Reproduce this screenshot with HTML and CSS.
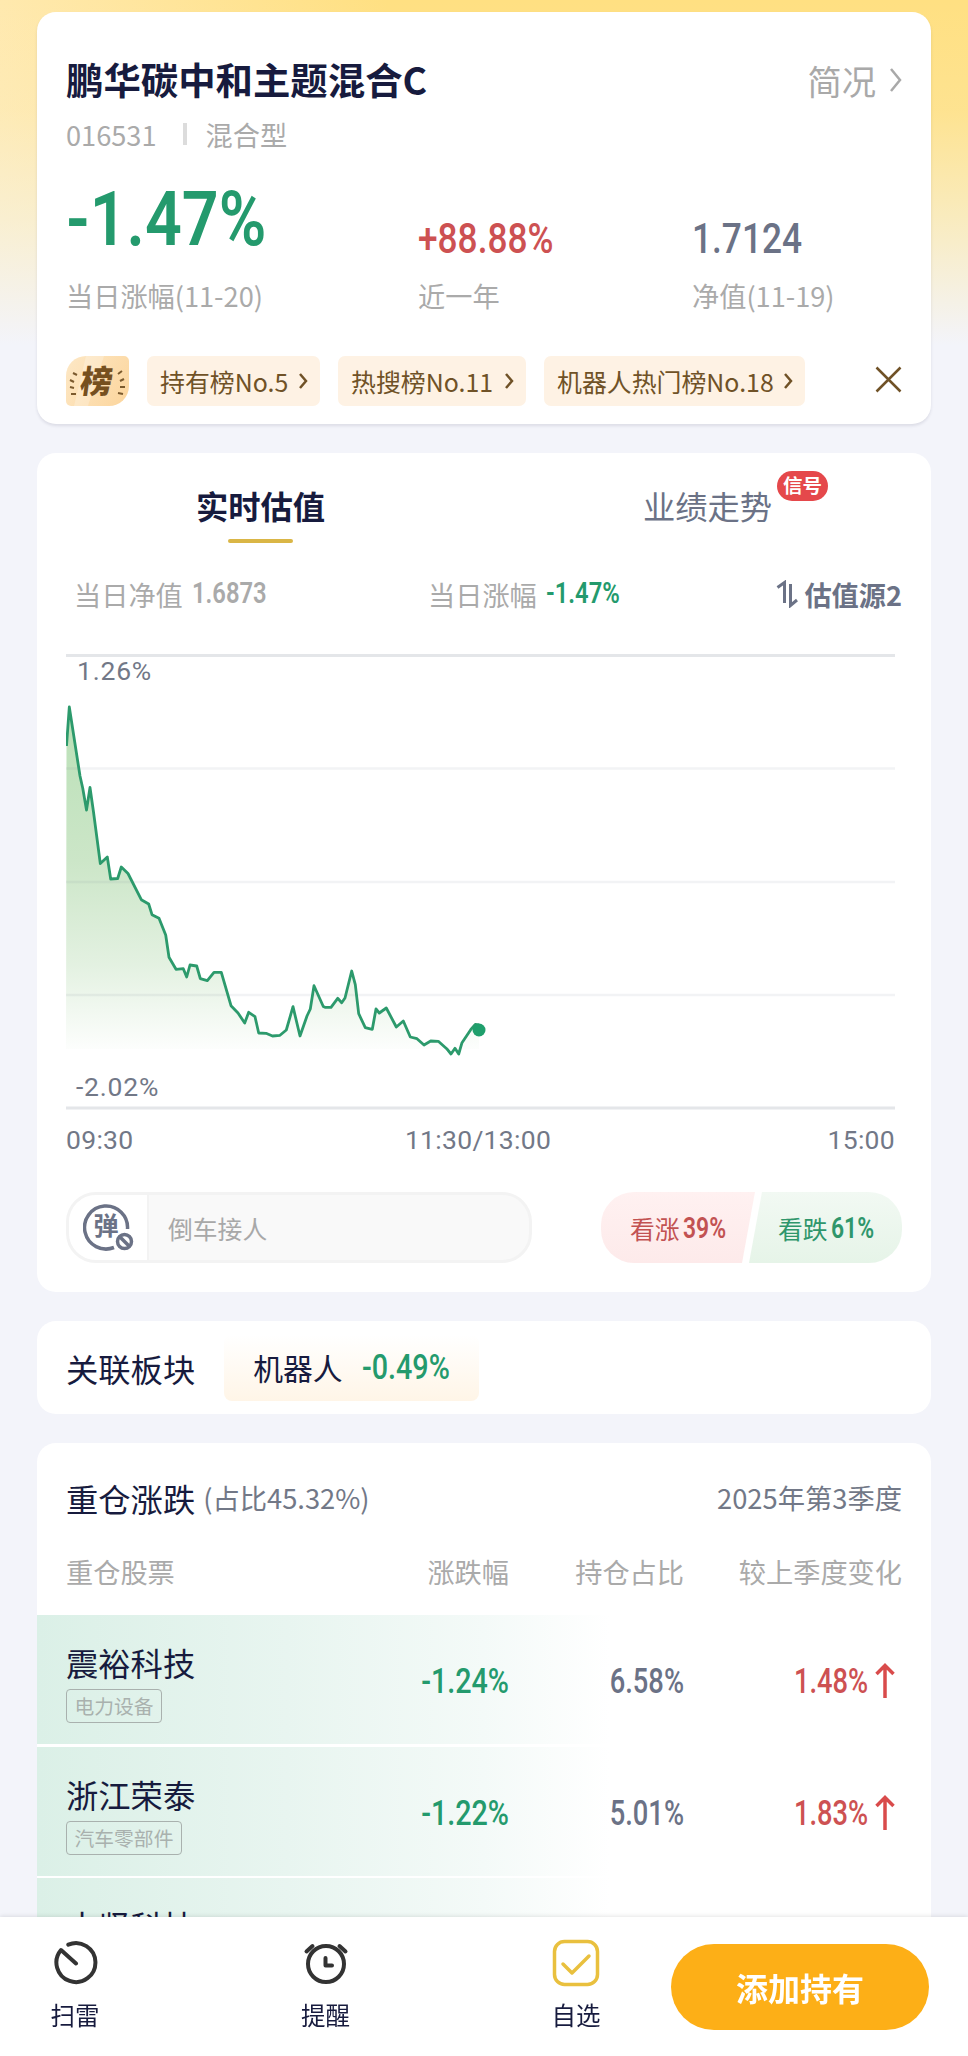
FILE: index.html
```html
<!DOCTYPE html>
<html lang="zh-CN">

<head>
    <meta charset="UTF-8" />
    <title>鹏华碳中和主题混合C</title>
    <link rel="stylesheet" href="styles.css">
</head>

<body>
    <main>
        <section class="card fund">
            <div class="fund-head">
                <h1>鹏华碳中和主题混合C</h1>
                <a class="more">简况
                    <svg width="13" height="26" viewBox="0 0 13 26"><path d="M2 2l9 11-9 11" /></svg>
                </a>
            </div>
            <div class="fund-sub"><span>016531</span><i></i><span>混合型</span></div>
            <div class="stats">
                <div>
                    <b class="num big green">-1.47%</b>
                    <p>当日涨幅(11-20)</p>
                </div>
                <div>
                    <b class="num mid red">+88.88%</b>
                    <p>近一年</p>
                </div>
                <div>
                    <b class="num mid slate">1.7124</b>
                    <p>净值(11-19)</p>
                </div>
            </div>
            <div class="ranks">
                <div class="rank-logo">
                    <svg width="63" height="50" viewBox="0 0 63 50">
                        <path d="M20 0h18L22 50H8z" fill="#fff" opacity=".25" />
                        <path d="M11 19l-4-2M8 26l-4-2M8 32l-4-1M10 38l-5 0M52 18l4-3M54 25l4-2M54 31l5 0M52 37l5 1" stroke="#7b5a2e" stroke-width="2" />
                    </svg>
                    <span>榜</span>
                </div>
                <a class="rank w1">持有榜No.5<svg width="9" height="16" viewBox="0 0 9 16"><path d="M1 1l6 7-6 7" /></svg></a>
                <a class="rank w2">热搜榜No.11<svg width="9" height="16" viewBox="0 0 9 16"><path d="M1 1l6 7-6 7" /></svg></a>
                <a class="rank w3">机器人热门榜No.18<svg width="9" height="16" viewBox="0 0 9 16"><path d="M1 1l6 7-6 7" /></svg></a>
                <svg class="close" width="27" height="27" viewBox="0 0 27 27"><path d="M1.500 1.500l24 24M25.500 1.500l-24 24" /></svg>
            </div>
        </section>

        <section class="card valuation">
            <div class="tabs">
                <div class="tab active"><span>实时估值</span></div>
                <div class="tab"><span>业绩走势<em>信号</em></span></div>
            </div>
            <div class="quote">
                <div class="q1">当日净值<b class="num small">1.6873</b></div>
                <div class="q2">当日涨幅<b class="num small green">-1.47%</b></div>
                <div class="source">
                    <svg width="22" height="28" viewBox="0 0 22 28"><path d="M1.500 7.500L8.500 2.500V23M14.500 4V25.500L21 20" /></svg>
                    估值源2
                </div>
            </div>

            <svg class="chart" width="836" height="520" viewBox="66 640 836 520">
                <defs>
                    <linearGradient id="area" gradientUnits="userSpaceOnUse" x1="0" y1="707" x2="0" y2="1050">
                        <stop offset="0" stop-color="#b9e0b6" />
                        <stop offset=".45" stop-color="#cce6c8" />
                        <stop offset=".75" stop-color="#e3f1e1" />
                        <stop offset="1" stop-color="#fdfefd" />
                    </linearGradient>
                </defs>
                <path id="fill" fill="url(#area)" />
                <path class="grid" d="M66 768.500H895M66 882H895M66 995H895" />
                <path class="axis" d="M66 655.500H895M66 1108H895" />
                <polyline id="line" class="line" />
                <circle cx="479" cy="1030" r="6.500" fill="#1f9f6c" />
                <text x="77" y="680">1.26%</text>
                <text x="76" y="1096">-2.02%</text>
                <text class="time" x="66" y="1149">09:30</text>
                <text class="time" x="478" y="1149" text-anchor="middle">11:30/13:00</text>
                <text class="time" x="895" y="1149" text-anchor="end">15:00</text>
            </svg>

            <div class="talk">
                <div class="barrage">
                    <div class="barrage-switch">
                        <svg width="52" height="48" viewBox="0 0 52 48">
                            <path d="M31 43.500A21.500 21.500 0 1 1 44.500 25" />
                            <circle cx="41.500" cy="37.500" r="7" />
                            <path d="M37 33l9 9" />
                            <text x="23" y="31">弹</text>
                        </svg>
                    </div>
                    <span>倒车接人</span>
                </div>
                <div class="vote">
                    <div class="up">看涨<b class="num tiny">39%</b></div>
                    <div class="down">看跌<b class="num tiny">61%</b></div>
                </div>
            </div>
        </section>

        <section class="card sector">
            <h2>关联板块</h2>
            <div class="sector-chip">机器人<b class="num row green">-0.49%</b></div>
        </section>

        <section class="card holdings">
            <div class="holdings-head">
                <h2>重仓涨跌</h2>
                <span>(占比45.32%)</span>
                <span class="season">2025年第3季度</span>
            </div>
            <div class="line-grid thead">
                <span>重仓股票</span><span>涨跌幅</span><span>持仓占比</span><span>较上季度变化</span>
            </div>
            <div class="line-grid stock">
                <div>
                    <h3>震裕科技</h3>
                    <small>电力设备</small>
                </div>
                <b class="num row green">-1.24%</b>
                <b class="num row slate thin">6.58%</b>
                <div class="change"><b class="num row red thin">1.48%</b><svg width="20" height="35" viewBox="0 0 20 35"><path d="M10 35V2.500M1.500 11L10 2.500l8.500 8.500" /></svg></div>
            </div>
            <div class="line-grid stock">
                <div>
                    <h3>浙江荣泰</h3>
                    <small>汽车零部件</small>
                </div>
                <b class="num row green">-1.22%</b>
                <b class="num row slate thin">5.01%</b>
                <div class="change"><b class="num row red thin">1.83%</b><svg width="20" height="35" viewBox="0 0 20 35"><path d="M10 35V2.500M1.500 11L10 2.500l8.500 8.500" /></svg></div>
            </div>
            <div class="line-grid stock">
                <div>
                    <h3>中坚科技</h3>
                </div>
            </div>
        </section>
    </main>

    <nav>
        <a>
            <svg width="48" height="48" viewBox="0 0 48 48"><path d="M17.300 5.600A19.500 19.500 0 1 1 10 11L25 24.500" /></svg>
            扫雷
        </a>
        <a>
            <svg width="48" height="48" viewBox="0 0 48 48"><circle cx="24" cy="25" r="18" /><path d="M4.500 12.500l6-5.500M43.500 12.500l-6-5.500M23.500 19v7.500h6.500" /></svg>
            提醒
        </a>
        <a class="on">
            <svg width="48" height="48" viewBox="0 0 48 48"><rect x="2.500" y="2.500" width="43" height="43" rx="10" /><path d="M11 25l9 9 17-17" /></svg>
            自选
        </a>
        <button>添加持有</button>
    </nav>

    <script>
        // 分时估值走势
        const points = [
            [66.5, 746], [69.3, 707], [80, 776], [82.7, 788], [86.5, 810], [90, 787.5], [93.5, 812],
            [100.3, 863.5], [107.3, 857], [110.7, 879], [117.7, 878.5], [121.3, 867], [128, 873.5],
            [141.3, 899.7], [148.7, 904], [152, 914.7], [159, 918.3], [165.7, 935], [169, 957.3],
            [176, 969.3], [183.3, 968.7], [186.7, 977], [190, 965], [196.7, 966], [200.3, 978.7],
            [207.3, 980.7], [214, 972.3], [221.3, 972.3], [231, 1005.7], [238, 1013], [244.7, 1023],
            [248.7, 1012.3], [255, 1016.7], [258.7, 1033], [266, 1033.3], [272.5, 1036], [280, 1035.3],
            [286.3, 1030], [293, 1006.7], [300, 1036], [307, 1016], [310.3, 1009], [314, 985.7],
            [323.3, 1006.5], [325, 1007.3], [331, 1007.3], [337.7, 998.3], [341.7, 1002.7], [345, 998],
            [351.7, 971], [355.3, 984.7], [358.7, 1013.7], [365.3, 1027.7], [372.3, 1029.3], [376, 1009],
            [379.3, 1013], [386.3, 1008], [396.3, 1027], [403.3, 1021], [410.3, 1037], [417, 1038.7],
            [424, 1045], [430.7, 1041], [438.3, 1041.3], [446.7, 1048.7], [451, 1054], [455, 1048.3],
            [458.7, 1054], [462, 1042.7], [470.7, 1029.7], [475.3, 1024.3], [479, 1025]
        ];
        const line = points.map(p => p.join(',')).join(' ');
        document.getElementById('line').setAttribute('points', line);
        document.getElementById('fill').setAttribute('d', 'M66 1049L' + line + 'V1049Z');
    </script>
</body>

</html>
```
FILE: styles.css
```css
* {
    box-sizing: border-box;
    margin: 0;
    padding: 0;
}

body {
    height: 2056px;
    overflow: hidden;
    font-family: "Noto Sans CJK SC", sans-serif;
    font-size: 27.200px;
    color: #171b3e;
    background:
        linear-gradient(rgba(243, 244, 250, 0) 0, rgba(246, 242, 225, .15) 110px, rgba(245, 243, 232, .6) 220px, #f3f4fa 345px),
        linear-gradient(90deg, #ffe9ae, #ffe082 40%, #ffe082);
}

main {
    display: flex;
    flex-direction: column;
    gap: 29px;
    padding: 12px 37px 0;
}

svg {
    display: block;
    flex: none;
    fill: none;
}

h1,
h2,
h3 {
    font-weight: 400;
    font-size: 32.300px;
}

.card {
    background: #fff;
    border-radius: 19px;
    padding: 0 29px;
}

.green { color: #249a6d; }
.red { color: #cd5152; }
.slate { color: #6b7286; }

/* condensed digits */
.num {
    display: inline-block;
    font-family: Roboto, sans-serif;
    font-weight: 500;
    white-space: nowrap;
    transform: scaleX(.82);
    transform-origin: left center;
}

/* fund card */
.fund {
    height: 412px;
    padding-top: 40px;
    box-shadow: 0 2px 3px rgba(60, 60, 90, .12);
}

.fund-head {
    display: flex;
    justify-content: space-between;
    align-items: center;
    height: 54px;
}

h1 {
    font-size: 37.400px;
    font-weight: 700;
    line-height: 54px;
}

.more {
    display: flex;
    align-items: center;
    gap: 13px;
    padding-top: 2px;
    font-size: 34.300px;
    line-height: 54px;
    color: #a9a9a9;
}

.more svg {
    stroke: #a9a9a9;
    stroke-width: 2.500;
}

.fund-sub {
    display: flex;
    align-items: center;
    height: 36px;
    margin-top: 10px;
    color: #aaa;
}

.fund-sub i {
    width: 4px;
    height: 22px;
    margin: 0 19px 0 26px;
    background: #dcdcdc;
}

.stats {
    display: grid;
    grid-template-columns: 352px 274px 1fr;
    margin-top: 26px;
}

.stats > div {
    display: flex;
    flex-direction: column;
    justify-content: flex-end;
}

.stats p {
    margin-top: 17px;
    line-height: 40px;
    color: #aaa;
}

.big {
    margin-bottom: -1px;
    padding-top: 1px;
    font-size: 76px;
    font-weight: 600;
    line-height: 80px;
    transform: scaleX(.85);
}

.mid {
    font-size: 43px;
    line-height: 40px;
}

.small {
    font-size: 29px;
    font-weight: 600;
}

.tiny {
    width: 42px;
    font-size: 29px;
    font-weight: 600;
    transform: scaleX(.79);
}

.row {
    font-size: 35px;
}

.ranks {
    display: flex;
    align-items: center;
    height: 50px;
    gap: 18px;
    margin-top: 41px;
}

.rank-logo {
    position: relative;
    width: 63px;
    height: 50px;
    overflow: hidden;
    border-radius: 20px 5px 20px 5px;
    background: linear-gradient(120deg, #fde8c6, #fcd59c);
}

.rank-logo span {
    position: absolute;
    left: 15px;
    top: 3px;
    font-size: 32px;
    font-weight: 900;
    line-height: 40px;
    color: #76501f;
    transform: skewX(-8deg);
}

.rank {
    display: flex;
    align-items: center;
    justify-content: space-between;
    height: 50px;
    padding: 0 12px 0 13px;
    border-radius: 7px;
    background: #fef2e4;
    font-size: 24.900px;
    color: #705227;
    white-space: nowrap;
}

.rank svg,
.close {
    stroke: #705227;
    stroke-width: 2.500;
}

.w1 { width: 173px; }
.w2 { width: 188px; }
.w3 { width: 261px; }

.close {
    margin: 0 0 4px auto;
}

/* valuation card */
.valuation {
    height: 839px;
}

.tabs {
    display: flex;
    height: 92px;
    margin: 0 -29px;
}

.tab {
    flex: 1;
    padding-top: 28px;
    text-align: center;
    font-size: 32.300px;
    line-height: 48px;
    color: #6b7286;
}

.tab span {
    position: relative;
}

.tab.active {
    font-weight: 700;
    color: #171b3e;
}

.tab.active::after {
    content: "";
    display: block;
    width: 65px;
    height: 4px;
    margin: 10px auto 0;
    border-radius: 2px;
    background: #dab646;
}

.tab em {
    position: absolute;
    left: 134px;
    top: -11px;
    width: 51px;
    height: 30px;
    border-radius: 15px;
    background: #e5484b;
    color: #fff;
    font-size: 19.500px;
    font-style: normal;
    font-weight: 700;
    line-height: 28px;
}

.quote {
    display: flex;
    align-items: center;
    height: 40px;
    margin-top: 29px;
    padding-left: 8px;
    line-height: 40px;
    color: #aaa;
}

.quote .num {
    margin-left: 9px;
    line-height: 39px;
    vertical-align: top;
}

.q1 { width: 354px; }

.source {
    display: flex;
    align-items: center;
    gap: 6px;
    margin-left: auto;
    font-weight: 700;
    color: #6b7286;
}

.source svg {
    stroke: #6b7286;
    stroke-width: 3;
}

.chart {
    margin-top: 26px;
}

.chart text {
    font-family: Roboto, sans-serif;
    font-size: 26.500px;
    letter-spacing: .8px;
    fill: #727887;
}

.chart .time {
    letter-spacing: .3px;
}

.grid { stroke: rgba(110, 125, 145, .09); stroke-width: 2.500; }
.axis { stroke: #e4e6e9; stroke-width: 3; }

.line {
    stroke: #2c9a6c;
    stroke-width: 2.800;
    stroke-linejoin: round;
}

.talk {
    display: flex;
    justify-content: space-between;
    margin-top: 32px;
    font-size: 24.800px;
    line-height: 71px;
}

.barrage {
    display: flex;
    width: 466px;
    height: 71px;
    border: 3px solid #f3f3f3;
    border-radius: 30px;
    background: #f9f9f9;
    color: #a8a8a8;
    overflow: hidden;
    line-height: 67px;
}

.barrage-switch {
    width: 80px;
    margin-right: 19px;
    padding: 9px 0 0 14px;
    border-right: 2px solid #f3f3f3;
    background: #fff;
}

.barrage-switch svg {
    stroke: #6b7286;
    stroke-width: 3.500;
}

.barrage-switch text {
    font-size: 25px;
    font-weight: 700;
    text-anchor: middle;
    fill: #6b7286;
    stroke: none;
}

.vote {
    display: flex;
    width: 301px;
    height: 71px;
    border-radius: 33px;
    overflow: hidden;
}

.vote div {
    padding-left: 29px;
    line-height: 73px;
    white-space: nowrap;
}

.vote .num {
    margin-left: 3px;
    line-height: 72px;
    vertical-align: top;
}

.up {
    width: 154px;
    color: #c25252;
    background: linear-gradient(#fff1f1, #fdeaea);
    clip-path: polygon(0 0, 100% 0, 141px 100%, 0 100%);
}

.down {
    width: 153px;
    margin-left: -6px;
    color: #2f966b;
    background: linear-gradient(#f2f9f3, #e6f4e8);
    clip-path: polygon(13px 0, 100% 0, 100% 100%, 0 100%);
}

/* sector */
.sector {
    display: flex;
    align-items: center;
    height: 93px;
}

.sector-chip {
    width: 255px;
    height: 66px;
    margin-left: 29px;
    padding-left: 29px;
    border-radius: 8px;
    background: linear-gradient(#fff, #fff5e7);
    font-size: 29.800px;
    line-height: 65px;
    white-space: nowrap;
}

.sector-chip .num {
    margin-left: 19px;
    line-height: 66px;
    vertical-align: top;
}

/* holdings */
.holdings {
    height: 620px;
    overflow: hidden;
}

.holdings-head {
    display: flex;
    align-items: center;
    height: 60px;
    margin-top: 25px;
    color: #727887;
}

.holdings-head h2 {
    margin-right: 8px;
    color: #171b3e;
}

.holdings-head span {
    margin-top: -2px;
    font-size: 27.300px;
}

.holdings-head .season {
    margin-left: auto;
}

.line-grid {
    display: grid;
    grid-template-columns: 268px 175px 175px 218px;
    margin: 0 -29px;
    padding: 0 29px;
    text-align: right;
}

.line-grid > :first-child {
    text-align: left;
}

.thead {
    height: 87px;
    line-height: 87px;
    color: #aaa;
}

.stock {
    height: 129px;
    margin-bottom: 2.500px;
    background: linear-gradient(90deg, #dbf0e7, #e8f5f0 28%, #f4faf8 50%, #fff 64%);
}

.stock h3 {
    margin-top: 24px;
    line-height: 46px;
}

.stock small {
    display: inline-block;
    height: 34px;
    margin-top: 4px;
    padding: 0 7.500px;
    border: 1px solid #a9b1ae;
    border-radius: 4px;
    font-size: 19.800px;
    line-height: 31px;
    color: #a9b1ae;
    vertical-align: top;
}

.stock .num {
    line-height: 133px;
    transform-origin: right center;
}

.stock .thin {
    transform: scaleX(.78);
}

.change {
    display: flex;
    justify-content: flex-end;
    gap: 7px;
    padding-right: 7px;
}

.change svg {
    margin-top: 48px;
    stroke: #d94b4b;
    stroke-width: 3.500;
}

/* bottom bar */
nav {
    position: fixed;
    left: 0;
    right: 0;
    bottom: 0;
    display: flex;
    height: 139px;
    background: #fff;
    box-shadow: 0 -1px 4px rgba(0, 0, 0, .1);
}

nav a {
    width: 150px;
    margin-right: 100.500px;
    padding-top: 22px;
    text-align: center;
    font-size: 24.500px;
    line-height: 36px;
}

nav a.on {
    margin-right: 20px;
}

nav svg {
    margin: 0 auto 10px;
    stroke: #333;
    stroke-width: 4;
    stroke-linecap: round;
    stroke-linejoin: round;
}

nav .on svg {
    stroke: #e9c03e;
    stroke-width: 3.500;
}

nav button {
    width: 258px;
    height: 86px;
    margin-top: 27px;
    border: none;
    border-radius: 43px;
    background: #fdaf17;
    color: #fff;
    font: 700 32px "Noto Sans CJK SC", sans-serif;
}
```
